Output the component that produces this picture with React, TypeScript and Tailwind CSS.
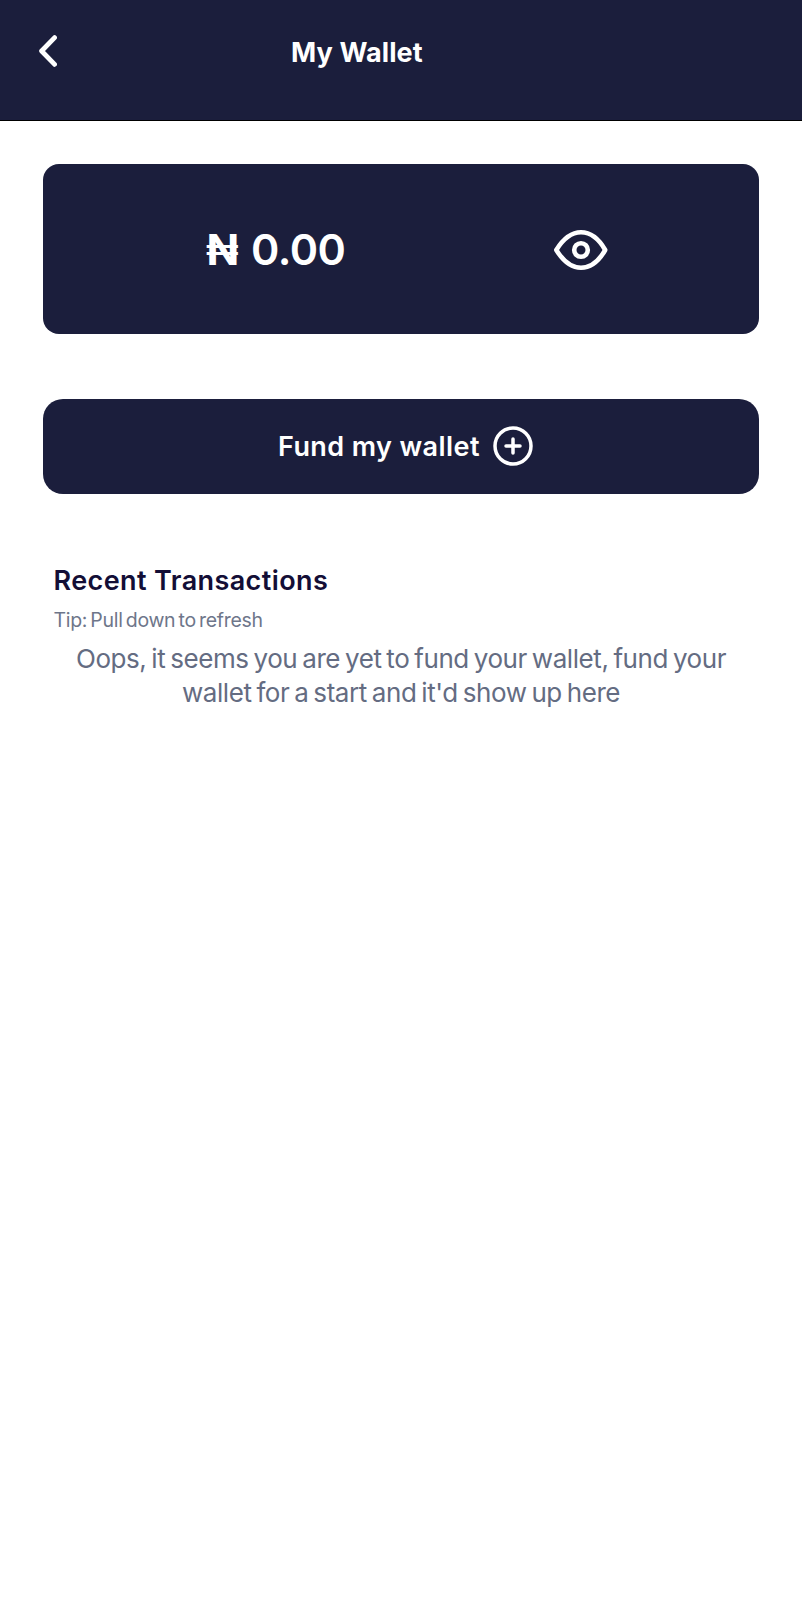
const balance = "0.00";

const ChevronLeft = () => (
  <svg width="18" height="32" viewBox="0 0 18 32" fill="none">
    <path d="M15.6 2.6 L2.6 16 L15.6 29.4" stroke="white" strokeWidth="4.8" strokeLinecap="round" strokeLinejoin="round" />
  </svg>
);

const EyeIcon = () => (
  <svg width="56" height="42" viewBox="0 0 56 42" fill="none" stroke="white" strokeWidth="4.6" strokeLinejoin="round">
    <path d="M3.3 21 C9.500 11 17 3.300 28 3.300 C39 3.300 46.500 11 52.200 21 C46.500 31 39 38.700 28 38.700 C17 38.700 9.500 31 3.300 21 Z" />
    <circle cx="28" cy="21" r="6.8" />
  </svg>
);

const PlusCircleIcon = () => (
  <svg width="40" height="40" viewBox="0 0 40 40" fill="none" stroke="white" strokeWidth="3.5" strokeLinecap="round">
    <circle cx="20" cy="20" r="18" />
    <path d="M20 13 V27 M13 20 H27" />
  </svg>
);

const Header = () => (
  <header className="flex h-[121px] items-start border-b border-black bg-[#1b1e3c] pl-[39px] pt-[35px]">
    <button aria-label="Back">
      <ChevronLeft />
    </button>
    <h1 className="ml-[234px] mt-[2px] text-[27px] leading-8 font-bold tracking-[0.1px] text-white whitespace-nowrap">My Wallet</h1>
  </header>
);

const WalletPage = () => {
  return (
    <div className="min-h-[1600px] w-full bg-white font-['Inter',sans-serif]">
      <Header />
      <main className="px-[43px] pt-[43px]">
        {/* Balance */}
        <section className="flex h-[170px] items-center rounded-2xl bg-[#1b1e3c] pl-[163px]">
          <p className="flex w-[347px] items-center gap-[12px] text-[43px] leading-none font-bold text-white whitespace-nowrap">
            <span className="w-[33px] tracking-[-1px]">₦</span>
            <span className="font-semibold tracking-[-0.5px]">{balance}</span>
          </p>
          <button aria-label="Hide balance" className="pt-px">
            <EyeIcon />
          </button>
        </section>

        <button className="mt-[65px] flex h-[95px] w-full items-center rounded-[20px] bg-[#1b1e3c] pl-[235px] text-white">
          <span className="w-[215px] pt-[2px] text-left text-[27px] font-semibold tracking-[0.42px] whitespace-nowrap">Fund my wallet</span>
          <span className="pb-[2px]">
            <PlusCircleIcon />
          </span>
        </button>

        {/* Transactions */}
        <section className="pt-[70px]">
          <h2 className="ml-[10.5px] text-[27px] leading-[34px] font-semibold tracking-[0.4px] text-[#130e36] whitespace-nowrap">Recent Transactions</h2>
          <p className="ml-[10.5px] mt-[8px] text-[19.5px] leading-7 tracking-[-0.3px] [word-spacing:-2px] text-[#6e768a] whitespace-nowrap">Tip: Pull down to refresh</p>
          <p className="mt-[8px] text-center text-[26px] leading-[33.5px] tracking-[-0.42px] [word-spacing:-2px] text-[#646c82] whitespace-nowrap">
            <span className="block">Oops, it seems you are yet to fund your wallet, fund your</span>
            <span className="block">wallet for a start and it'd show up here</span>
          </p>
        </section>
      </main>
    </div>
  );
};

export default WalletPage;
